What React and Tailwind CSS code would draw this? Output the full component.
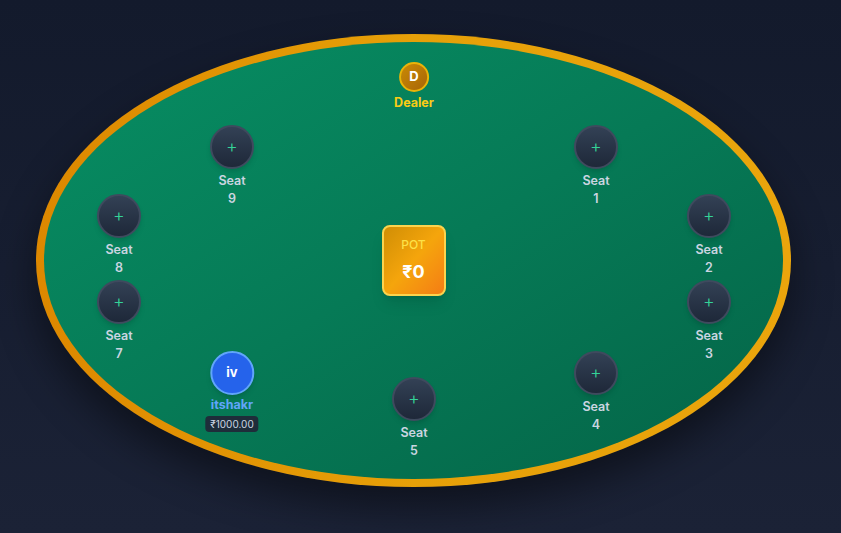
import React from "react";

const seats = [
  { n: 9, pos: "left-[196px] top-[91px]" },
  { n: 1, pos: "left-[560px] top-[91px]" },
  { n: 8, pos: "left-[83px] top-[160px]" },
  { n: 2, pos: "left-[673px] top-[160px]" },
  { n: 7, pos: "left-[83px] top-[246px]" },
  { n: 3, pos: "left-[673px] top-[246px]" },
  { n: 4, pos: "left-[560px] top-[317px]" },
  { n: 5, pos: "left-[378px] top-[343px]" },
];

function EmptySeat({ n, pos }) {
  return (
    <div className={`absolute ${pos} -translate-x-1/2 flex flex-col items-center`}>
      <button className="w-11 h-11 rounded-full border-2 border-[#3f4a5e] bg-gradient-to-b from-[#334155] to-[#1e2839] flex items-center justify-center text-[#34d399] text-lg font-light shadow-md">
        +
      </button>
      <div className="mt-[3px] text-[12.5px] leading-[18px] font-semibold text-[#cbd5e1] text-center">
        Seat
        <br />
        {n}
      </div>
    </div>
  );
}

export default function App() {
  return (
    <div
      className="w-[841px] h-[533px] bg-gradient-to-b from-[#131a2c] to-[#1b2236] pl-[36px] pt-[34px]"
      style={{ fontFamily: "Inter, 'Noto Sans', sans-serif" }}
    >
      {/* table rail */}
      <div className="relative w-[755px] h-[453px] rounded-[50%] p-2 bg-gradient-to-r from-[#dd8800] via-[#e6a008] to-[#eaa50c] shadow-[0_20px_40px_rgba(0,0,0,0.45)]">
        {/* felt */}
        <div className="w-full h-full rounded-[50%] bg-gradient-to-br from-[#078e63] via-[#067a56] to-[#046447] flex items-center justify-center">
          <div className="w-16 h-[71px] rounded-lg border-2 border-[#fcd34d] bg-gradient-to-br from-[#d08e05] via-[#f5a50c] to-[#f47c14] flex flex-col items-center justify-center shadow-lg">
            <div className="text-xs font-medium text-[#fde047] leading-4">POT</div>
            <div className="mt-[7px] text-lg font-bold text-white leading-6">₹0</div>
          </div>
        </div>

        {/* dealer */}
        <div className="absolute left-[378px] top-[28px] -translate-x-1/2 flex flex-col items-center">
          <div className="w-[30px] h-[30px] rounded-full border-2 border-[#eab308] bg-gradient-to-br from-[#c98a05] to-[#a86506] flex items-center justify-center text-white text-[13px] font-bold">
            D
          </div>
          <div className="mt-[3px] text-[12.5px] font-bold text-[#facc15] leading-4">Dealer</div>
        </div>

        {seats.map((s) => (
          <EmptySeat key={s.n} {...s} />
        ))}

        {/* occupied seat */}
        <div className="absolute left-[196px] top-[317px] -translate-x-1/2 flex flex-col items-center">
          <div className="w-11 h-11 rounded-full border-2 border-[#60a5fa] bg-[#2563eb] flex items-center justify-center text-white text-[13px] font-bold shadow-md">
            iv
          </div>
          <div className="mt-[2px] text-[12.5px] font-bold text-[#60a5fa] leading-4">itshakr</div>
          <div className="mt-[3px] px-[5px] rounded bg-[#1e2d3a] text-[10px] leading-4 text-[#cbd5e1]">₹1000.00</div>
        </div>
      </div>
    </div>
  );
}
